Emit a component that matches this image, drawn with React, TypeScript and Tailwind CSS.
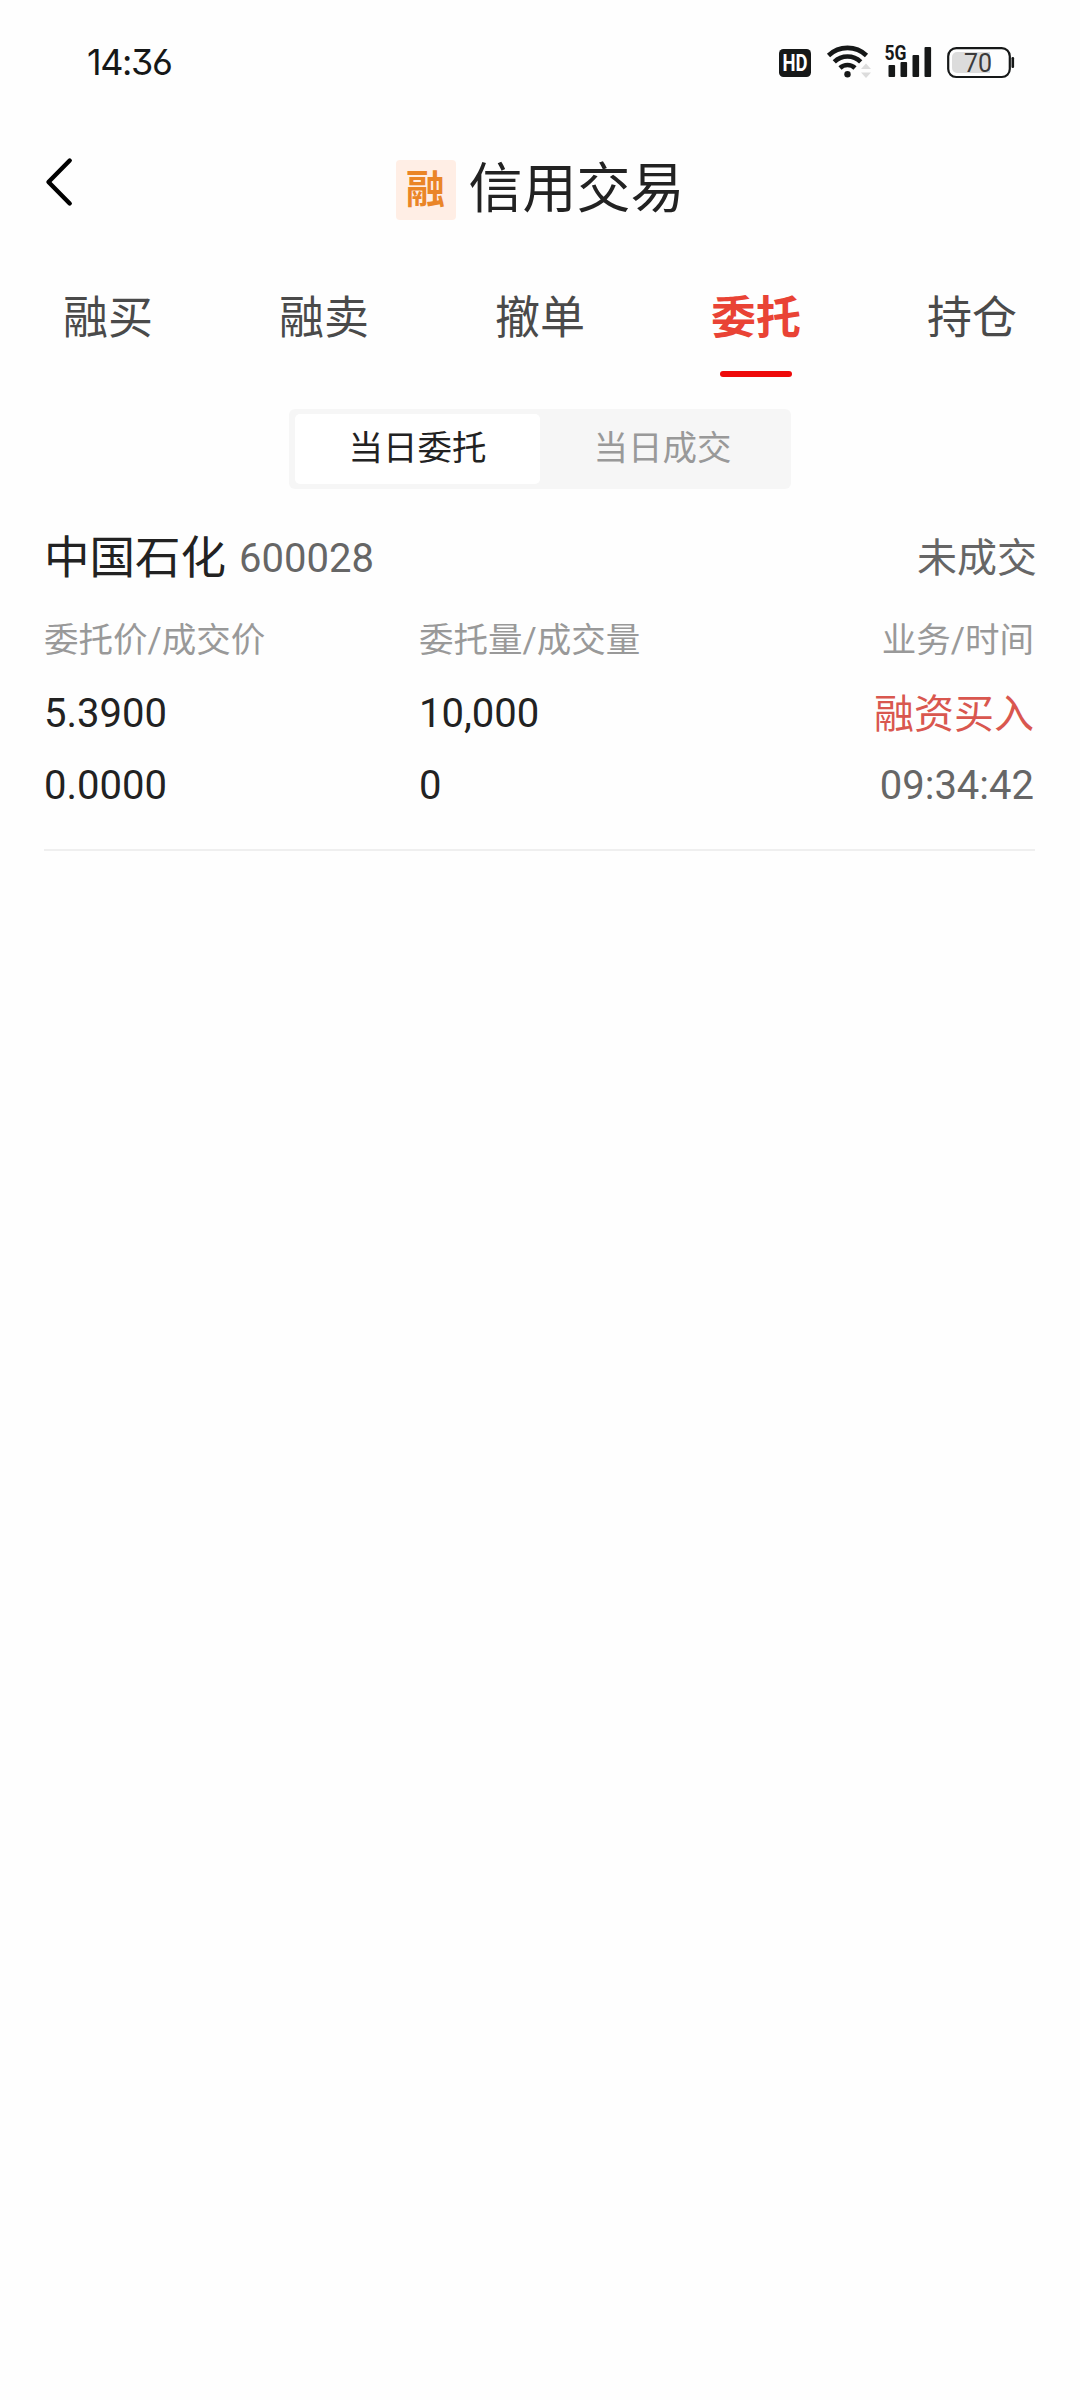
import clsx from 'clsx';
import { useState } from 'react';

const tabs = ['融买', '融卖', '撤单', '委托', '持仓'];
const segments = ['当日委托', '当日成交'];

type Order = {
	name: string;
	code: string;
	status: string;
	price: string;
	dealPrice: string;
	amount: string;
	dealAmount: string;
	business: string;
	time: string;
};

const orders: Order[] = [
	{
		name: '中国石化',
		code: '600028',
		status: '未成交',
		price: '5.3900',
		dealPrice: '0.0000',
		amount: '10,000',
		dealAmount: '0',
		business: '融资买入',
		time: '09:34:42'
	}
];

const StatusIcons = () => (
	<svg width="244" height="40" viewBox="776 42 244 40" fill="#161818">
		<rect x="779" y="49" width="32" height="28" rx="4.5" />
		<text
			x="795"
			y="71.3"
			textAnchor="middle"
			textLength="25"
			lengthAdjust="spacingAndGlyphs"
			className="fill-white font-['Roboto'] text-[23px] font-bold"
		>
			HD
		</text>

		<g fill="none" stroke="#161818" strokeWidth="4.6">
			<path d="M828.5 55.5a27.5 27.5 0 0 1 38 0" />
			<path d="M834.3 61.8a19 19 0 0 1 26.4 0" />
			<path d="M840 68a11 11 0 0 1 15 0" />
		</g>
		<circle cx="847.5" cy="74.3" r="3.2" />
		<path d="M866 63.5l5 5.5h-10zM866 78l5-5.5h-10z" fill="#dcdcdc" />

		<rect x="888.5" y="65" width="6.6" height="12" rx="1" />
		<rect x="900.5" y="62" width="6.6" height="15" rx="1" />
		<rect x="912.5" y="55" width="6.6" height="22" rx="1" />
		<rect x="924.5" y="47" width="6.6" height="30" rx="1" />
		<text
			x="884.5"
			y="60"
			textLength="22"
			lengthAdjust="spacingAndGlyphs"
			className="font-['Roboto'] text-[21px] font-bold"
		>
			5G
		</text>

		<rect
			x="948.2"
			y="48.2"
			width="61.6"
			height="28.8"
			rx="8"
			fill="none"
			stroke="#161818"
			strokeWidth="2.2"
		/>
		<path d="M957 52h33v21h-33a5 5 0 0 1-5-5v-11a5 5 0 0 1 5-5z" fill="#dcdcdc" />
		<rect x="1011.5" y="57" width="2.6" height="11" rx="1.2" />
		<text
			x="978"
			y="71.8"
			textAnchor="middle"
			className="fill-[#3a3a3a] font-['Roboto'] text-[25px]"
		>
			70
		</text>
	</svg>
);

const StatusBar = () => (
	<div className="flex h-[124px] items-center justify-between pr-[60px] pl-[87px]">
		<span className="font-['Inter'] text-[36px] leading-none tracking-[-1.4px] text-[#161818] [font-feature-settings:'cv03','cv09']">
			14:36
		</span>
		<StatusIcons />
	</div>
);

const Header = () => (
	<header className="relative flex h-[130px] items-center justify-center gap-[13px] pt-[2px]">
		<button type="button" aria-label="返回" className="absolute top-[33px] left-[45px]">
			<svg width="30" height="50" viewBox="0 0 30 50" fill="none">
				<path
					d="M24.7 3.5L3.5 25l21.2 21.5"
					stroke="#000"
					strokeWidth="4.4"
					strokeLinecap="round"
					strokeLinejoin="round"
				/>
			</svg>
		</button>
		<span className="flex size-[60px] items-center justify-center rounded-[4px] bg-[#ffeee5] pt-[1px] text-[39px] leading-none font-bold text-[#ea8527]">
			融
		</span>
		<h1 className="text-[54px] leading-none text-[#222]">信用交易</h1>
	</header>
);

const OrderItem = ({ order }: { order: Order }) => (
	<li className="mr-[45px] ml-[44px] border-b-2 border-[#efefef] pb-[27px] text-[40px] text-[#222]">
		<div className="flex h-[84px] items-center justify-between">
			<div className="flex items-center gap-[13px]">
				<span className="text-[45.5px]">{order.name}</span>
				<span className="text-[#666]">{order.code}</span>
			</div>
			<span className="-mr-[2px] text-[#666]">{order.status}</span>
		</div>
		<div className="grid grid-cols-[375px_1fr_auto]">
			<div className="flex flex-col">
				<span className="flex h-[77px] items-center pt-[3px] text-[34.5px] text-[#999]">
					委托价/成交价
				</span>
				<span className="flex h-[72px] items-center">{order.price}</span>
				<span className="flex h-[72px] items-center">{order.dealPrice}</span>
			</div>
			<div className="flex flex-col">
				<span className="flex h-[77px] items-center pt-[3px] text-[34.5px] text-[#999]">
					委托量/成交量
				</span>
				<span className="flex h-[72px] items-center">{order.amount}</span>
				<span className="flex h-[72px] items-center">{order.dealAmount}</span>
			</div>
			<div className="flex flex-col items-end pr-px">
				<span className="flex h-[77px] items-center pt-[3px] text-[34.5px] text-[#999]">
					业务/时间
				</span>
				<span className="flex h-[72px] items-center pt-[2px] text-[#d9574f]">
					{order.business}
				</span>
				<span className="flex h-[72px] items-center text-[#666]">{order.time}</span>
			</div>
		</div>
	</li>
);

const App = () => {
	const [tab, setTab] = useState('委托');
	const [segment, setSegment] = useState('当日委托');

	return (
		<div className="h-[2400px] w-[1080px] overflow-hidden bg-[#fefefe] font-['Roboto','Noto_Sans_CJK_SC',sans-serif]">
			<StatusBar />
			<Header />

			<nav className="grid h-[127px] grid-cols-5">
				{tabs.map(item => (
					<button
						key={item}
						type="button"
						onClick={() => setTab(item)}
						className={clsx(
							'flex flex-col items-center pt-[31px] text-[45px] leading-[68px]',
							item === tab ? 'font-bold text-[#e94335]' : 'text-[#4a4a4a]'
						)}
					>
						{item}
						{item === tab ? (
							<span className="mt-[18px] h-[6px] w-[72px] rounded-full bg-[#ee0a0a]" />
						) : null}
					</button>
				))}
			</nav>

			<div className="mx-auto mt-[28px] flex h-[80px] w-[502px] rounded-[6px] bg-[#f6f6f6] p-[5px] pl-[6px]">
				{segments.map(item => (
					<button
						key={item}
						type="button"
						onClick={() => setSegment(item)}
						className={clsx(
							'flex w-[245px] items-center justify-center rounded-[5px] pb-[2px] text-[34.5px] leading-none',
							item === segment ? 'bg-white text-[#222]' : 'text-[#999]'
						)}
					>
						{item}
					</button>
				))}
			</div>

			<ul className="mt-[28px]">
				{orders.map(order => (
					<OrderItem key={order.code} order={order} />
				))}
			</ul>
		</div>
	);
};

export default App;
